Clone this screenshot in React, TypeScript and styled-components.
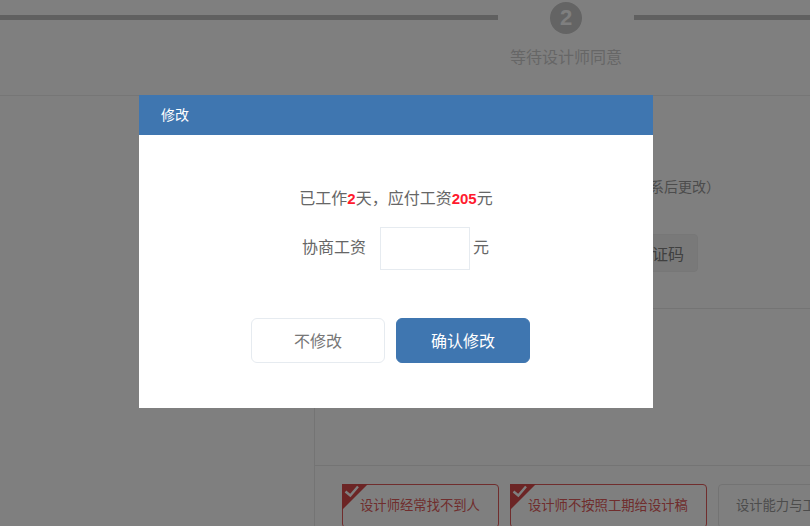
import React from 'react';
import styled, { createGlobalStyle } from 'styled-components';

const FONT = '"Liberation Sans", Arial, "Noto Sans CJK SC", sans-serif';

const GlobalStyle = createGlobalStyle`
  html, body {
    margin: 0;
    padding: 0;
    background: #fff;
    font-family: ${FONT};
  }
  * { box-sizing: border-box; }
`;

const Page = styled.div`
  position: relative;
  width: 810px;
  height: 526px;
  overflow: hidden;
  background: #fff;
`;

const Stepper = styled.div`
  display: flex;
  height: 96px;
  border-bottom: 1px solid #ececec;
`;

const StepLine = styled.div<{ $grow?: boolean }>`
  flex: ${(p) => (p.$grow ? '1' : '0 0 498px')};
  height: 5px;
  margin-top: 15px;
  background: #c0c0c0;
`;

const Step = styled.div`
  flex: 0 0 136px;
  display: flex;
  flex-direction: column;
  align-items: center;
  padding-top: 2px;
`;

const StepNumber = styled.div`
  width: 32px;
  height: 32px;
  border-radius: 50%;
  background: #c8c8c8;
  color: #fff;
  font-size: 22px;
  font-weight: 700;
  line-height: 32px;
  text-align: center;
`;

const StepLabel = styled.div`
  margin-top: 14px;
  font-size: 16px;
  line-height: 20px;
  color: #cdcdcd;
  white-space: nowrap;
`;

const Content = styled.div`
  margin-left: 314px;
  height: 430px;
  border-left: 1px solid #e8e8e8;
`;

const PhoneSection = styled.div`
  height: 213px;
  border-bottom: 1px solid #e8e8e8;
  padding-top: 81px;
  display: flex;
  flex-direction: column;
  align-items: flex-end;
`;

const Hint = styled.div`
  margin-right: 90px;
  font-size: 14px;
  line-height: 20px;
  color: #999;
`;

const CodeButton = styled.div`
  margin-top: 37px;
  margin-right: 112px;
  width: 120px;
  height: 38px;
  border: 1px solid #eee;
  border-radius: 4px;
  background: #f3f3f3;
  color: #808080;
  font-size: 16px;
  line-height: 40px;
  text-align: right;
  padding-right: 13px;
`;

const ReasonSpacer = styled.div`
  height: 157px;
  border-bottom: 1px solid #e8e8e8;
`;

const Reasons = styled.div`
  display: flex;
  gap: 11px;
  padding: 18px 0 0 27px;
`;

const Reason = styled.div<{ $on?: boolean }>`
  position: relative;
  flex: none;
  height: 44px;
  padding: 0 18px 0 17px;
  border: 1px solid ${(p) => (p.$on ? '#e05a5a' : '#e6e6e6')};
  border-radius: 4px;
  color: ${(p) => (p.$on ? '#e05a5a' : '#999')};
  font-size: 13.33px;
  line-height: 42px;
  white-space: nowrap;
`;

const Corner = styled.svg`
  position: absolute;
  left: -1px;
  top: -1px;
`;

const Overlay = styled.div`
  position: absolute;
  inset: 0;
  background: rgba(0, 0, 0, 0.5);
`;

const Modal = styled.div`
  position: absolute;
  left: 139px;
  top: 95px;
  width: 514px;
  height: 313px;
  background: #fff;
`;

const ModalHeader = styled.div`
  height: 40px;
  padding-left: 22px;
  background: #3f76b0;
  color: #fff;
  font-size: 14px;
  line-height: 40px;
`;

const ModalBody = styled.div`
  display: flex;
  flex-direction: column;
  align-items: center;
  padding-top: 53px;
`;

const Summary = styled.div`
  font-size: 16px;
  line-height: 22px;
  color: #666;
`;

const Red = styled.b`
  color: #ff1a2e;
  font-size: 15px;
`;

const WageRow = styled.div`
  display: flex;
  align-items: center;
  margin: 17px 1px 0 0;
  font-size: 16px;
  color: #666;
`;

const WageText = styled.span`
  line-height: 20px;
  margin-bottom: 1px;
`;

const WageInput = styled.input`
  width: 90px;
  height: 43px;
  margin: 0 3px 0 14px;
  border: 1px solid #e6ebf0;
  background: #fff;
  outline: none;
`;

const Buttons = styled.div`
  display: flex;
  gap: 11px;
  margin: 48px 11px 0 0;
`;

const ModalButton = styled.div<{ $primary?: boolean }>`
  width: 134px;
  height: 45px;
  border-radius: 6px;
  border: 1px solid ${(p) => (p.$primary ? '#3f76b0' : '#e6ebf0')};
  background: ${(p) => (p.$primary ? '#3f76b0' : '#fff')};
  color: ${(p) => (p.$primary ? '#fff' : '#777')};
  font-size: 16px;
  line-height: 45px;
  text-align: center;
`;

const Check = () => (
  <Corner width="26" height="26" viewBox="0 0 26 26">
    <path d="M0 0H26L0 26Z" fill="#d84a4a" />
    <path d="M3.5 7.5L8.3 11.5L16 2.5" fill="none" stroke="#fff" strokeWidth="2.4" />
  </Corner>
);

export default function App() {
  return (
    <Page>
      <GlobalStyle />
      <Stepper>
        <StepLine />
        <Step>
          <StepNumber>2</StepNumber>
          <StepLabel>等待设计师同意</StepLabel>
        </Step>
        <StepLine $grow />
      </Stepper>
      <Content>
        <PhoneSection>
          <Hint>系后更改）</Hint>
          <CodeButton>证码</CodeButton>
        </PhoneSection>
        <ReasonSpacer />
        <Reasons>
          <Reason $on>
            <Check />
            设计师经常找不到人
          </Reason>
          <Reason $on>
            <Check />
            设计师不按照工期给设计稿
          </Reason>
          <Reason>设计能力与工作态度</Reason>
        </Reasons>
      </Content>
      <Overlay />
      <Modal>
        <ModalHeader>修改</ModalHeader>
        <ModalBody>
          <Summary>
            已工作<Red>2</Red>天，应付工资<Red>205</Red>元
          </Summary>
          <WageRow>
            <WageText>协商工资</WageText>
            <WageInput />
            <WageText>元</WageText>
          </WageRow>
          <Buttons>
            <ModalButton>不修改</ModalButton>
            <ModalButton $primary>确认修改</ModalButton>
          </Buttons>
        </ModalBody>
      </Modal>
    </Page>
  );
}
